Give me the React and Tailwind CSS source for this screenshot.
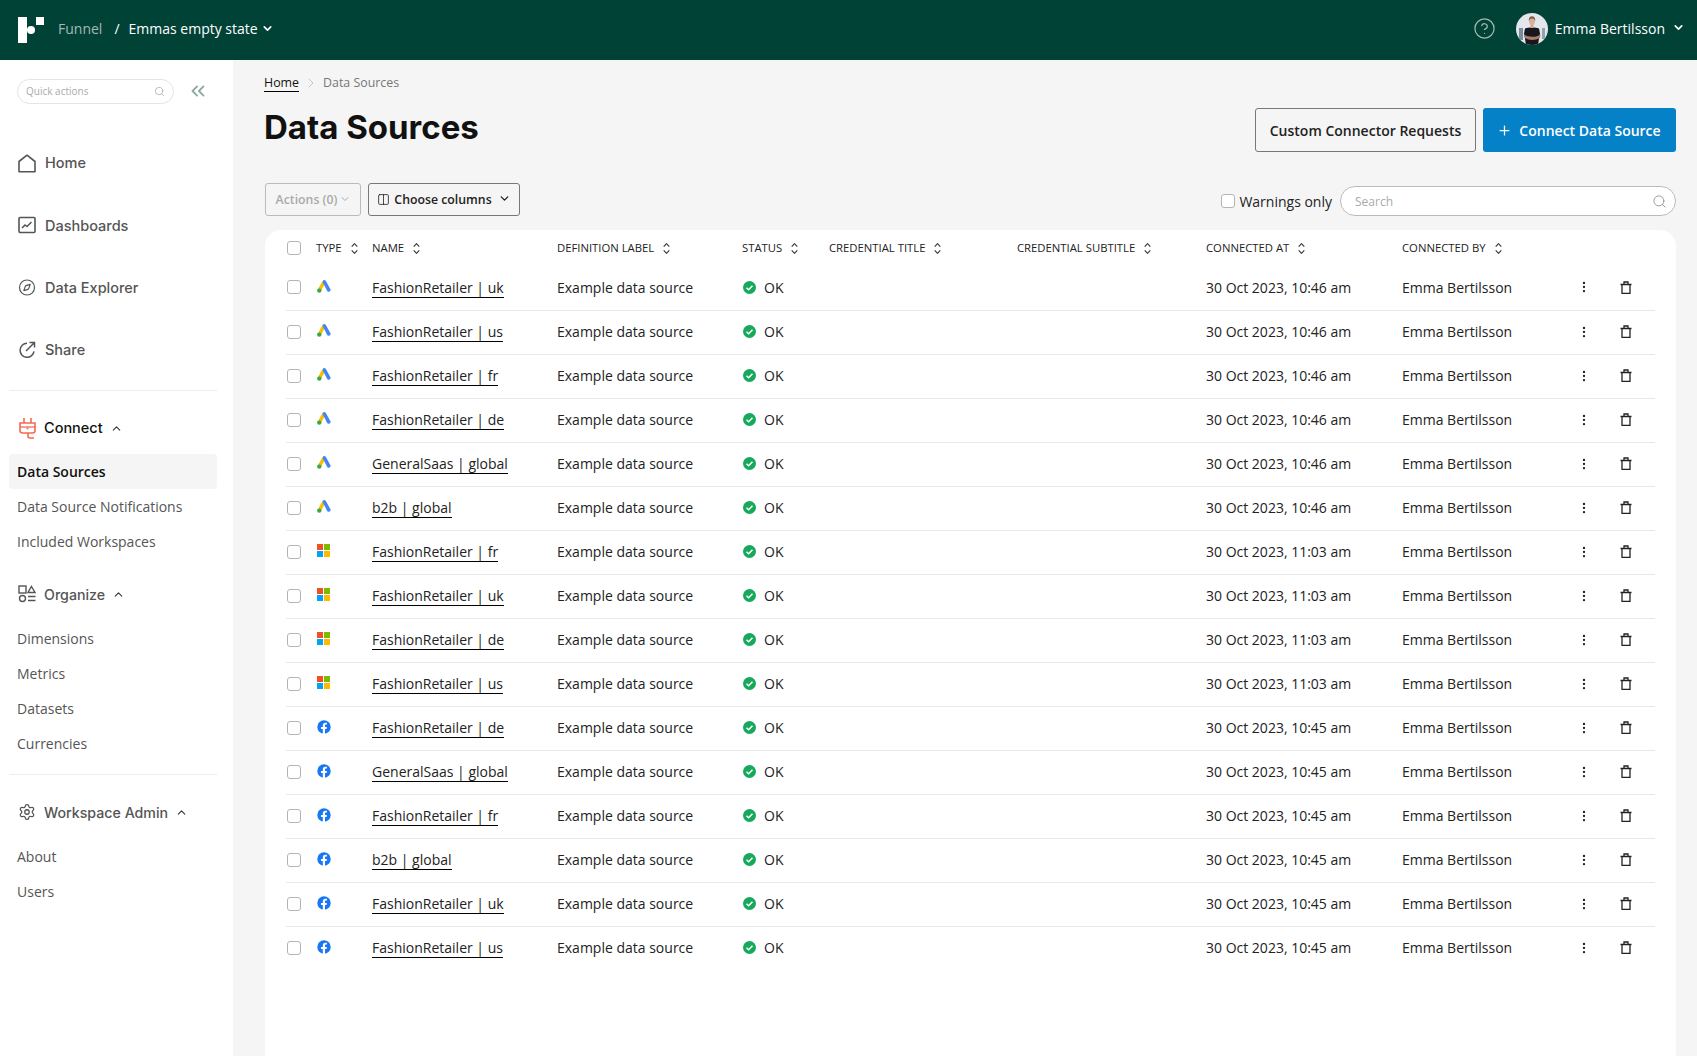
import React from "react";
import {
  ChevronDown,
  ChevronUp,
  ChevronRight,
  ChevronsLeft,
  CircleHelp,
  Columns2,
  Compass,
  EllipsisVertical,
  Plus,
  Search,
  Settings,
} from "lucide-react";

const openSans = "font-['Open_Sans',sans-serif]";
const grotesk = "font-['Inter',sans-serif]";

const rows = [
  ["ads", "FashionRetailer | uk", "10:46"],
  ["ads", "FashionRetailer | us", "10:46"],
  ["ads", "FashionRetailer | fr", "10:46"],
  ["ads", "FashionRetailer | de", "10:46"],
  ["ads", "GeneralSaas | global", "10:46"],
  ["ads", "b2b | global", "10:46"],
  ["ms", "FashionRetailer | fr", "11:03"],
  ["ms", "FashionRetailer | uk", "11:03"],
  ["ms", "FashionRetailer | de", "11:03"],
  ["ms", "FashionRetailer | us", "11:03"],
  ["fb", "FashionRetailer | de", "10:45"],
  ["fb", "GeneralSaas | global", "10:45"],
  ["fb", "FashionRetailer | fr", "10:45"],
  ["fb", "b2b | global", "10:45"],
  ["fb", "FashionRetailer | uk", "10:45"],
  ["fb", "FashionRetailer | us", "10:45"],
];

const columns = [
  ["TYPE", "w-[56px]"],
  ["NAME", "w-[185px]"],
  ["DEFINITION LABEL", "w-[185px]"],
  ["STATUS", "w-[87px]"],
  ["CREDENTIAL TITLE", "w-[188px]"],
  ["CREDENTIAL SUBTITLE", "w-[189px]"],
  ["CONNECTED AT", "w-[196px]"],
  ["CONNECTED BY", "w-[175px]"],
];

function Logo() {
  return (
    <svg width="26" height="26" viewBox="0 0 26 26" fill="#fff">
      <rect x="0" y="0" width="9" height="26" />
      <rect x="18" y="0" width="8" height="8" />
      <circle cx="13" cy="13" r="4" />
    </svg>
  );
}

function Avatar() {
  return (
    <svg width="32" height="32" viewBox="0 0 32 32">
      <clipPath id="avatar-clip">
        <circle cx="16" cy="16" r="16" />
      </clipPath>
      <g clipPath="url(#avatar-clip)">
        <rect width="32" height="32" fill="#e3e6ea" />
        <rect x="3" y="15" width="4" height="12" fill="#7d8ba0" />
        <rect x="26" y="15" width="3" height="11" fill="#94a1b2" />
        <path d="M9 15.500c2-1 4-1 7-1s5 0 7 1l1 5-1 5-1 7H10l-1-7-1-5z" fill="#17171d" />
        <path d="M8 21.500c4 2.500 12 3.500 16.500 0l-.5 3.500c-5 2.500-11 2.500-15 0z" fill="#a97d66" />
        <rect x="14.500" y="11" width="3" height="4" fill="#d6a88f" />
        <ellipse cx="16" cy="8" rx="3" ry="3.800" fill="#d9b19a" />
        <path d="M12.700 8c0-3.500 1.500-4.800 3.300-4.800s3.300 1.300 3.300 4.800c-.8-1.800-1.700-2.600-3.300-2.600s-2.500.8-3.300 2.600z" fill="#7a5c42" />
      </g>
    </svg>
  );
}

function AdsIcon() {
  return (
    <svg width="14" height="13" viewBox="0 0 14 13">
      <path d="M5.400 1.200 1 9l3 1.800L8.100 3.400z" fill="#fbbc04" />
      <path d="M8.600.6a2 2 0 0 0-3 .8l-.2.3 3.700 7 .9 2.100a1.900 1.900 0 0 0 3.300-1.900L8.900 1.100z" fill="#4285f4" />
      <circle cx="2.300" cy="10.600" r="2.200" fill="#34a853" />
    </svg>
  );
}

function MsIcon() {
  return (
    <svg width="13" height="13" viewBox="0 0 13 13">
      <rect width="6" height="6" fill="#f25022" />
      <rect x="7" width="6" height="6" fill="#7fba00" />
      <rect y="7" width="6" height="6" fill="#00a4ef" />
      <rect x="7" y="7" width="6" height="6" fill="#ffb900" />
    </svg>
  );
}

function FbIcon() {
  return (
    <svg width="14" height="14" viewBox="0 0 14 14">
      <circle cx="7" cy="7" r="6.700" fill="#1877f2" />
      <path d="M9.600 9 9.900 7H8V5.700c0-.6.3-1.100 1.100-1.100h.9V2.900S9.200 2.700 8.400 2.700C6.800 2.700 5.800 3.700 5.800 5.400V7H4v2h1.800v4.900a7 7 0 0 0 2.200 0V9z" fill="#fff" />
    </svg>
  );
}

function TrashIcon() {
  return (
    <svg width="12" height="13" viewBox="0 0 12 13" fill="none" stroke="#222" strokeWidth="1.300">
      <path d="M2 3.500h8v8.800H2zM.5 3.500h11M4 3.500V1h4v2.500" />
    </svg>
  );
}

function HomeIcon() {
  return (
    <svg width="18" height="19" viewBox="0 0 18 19" fill="none" stroke="#555" strokeWidth="1.600">
      <path d="M1 17.800V7.500L9 1.200l8 6.300v10.300z" strokeLinejoin="round" />
    </svg>
  );
}

function DashIcon() {
  return (
    <svg width="18" height="18" viewBox="0 0 18 18" fill="none" stroke="#555" strokeWidth="1.600">
      <rect x="1" y="1.500" width="16" height="15" rx="1" />
      <path d="m4 12 3-3 2 1.500L13.500 6" strokeWidth="1.500" />
    </svg>
  );
}

function ShareIcon() {
  return (
    <svg width="18" height="18" viewBox="0 0 18 18" fill="none" stroke="#555" strokeWidth="1.500">
      <path d="M9 2.300a7 7 0 1 0 7 8M8 10l8.500-8.500M11.500 1.500h5v5" />
    </svg>
  );
}

function PlugIcon() {
  return (
    <svg width="17" height="21" viewBox="0 0 17 21" fill="none" stroke="#f4694f" strokeWidth="1.600">
      <path d="M5 0v5M12 0v5" />
      <path d="M1 5h15v7.500a2.500 2.500 0 0 1-2.500 2.500h-10A2.500 2.500 0 0 1 1 12.500z" />
      <path d="M.5 9h16" strokeWidth="1.300" />
      <path d="M9 15v3a2 2 0 0 0 2 2h4" />
      <circle cx="8.500" cy="10.500" r="1" fill="#f4694f" stroke="none" />
    </svg>
  );
}

function OrganizeIcon() {
  return (
    <svg width="18" height="18" viewBox="0 0 18 18" fill="none" stroke="#555" strokeWidth="1.400">
      <rect x="1" y="1" width="7" height="7" />
      <path d="M13.500 1.500 17 7.500h-7z" />
      <circle cx="4.500" cy="13.500" r="3" />
      <path d="M10 11.500h7.500M10 15.500h7.500" />
    </svg>
  );
}

function SortIcon() {
  return (
    <svg width="7" height="11" viewBox="0 0 7 11" fill="none" stroke="#333" strokeWidth="1.100">
      <path d="m.7 3.700 2.800-3 2.800 3M.7 7.300l2.800 3 2.800-3" />
    </svg>
  );
}

function OkIcon() {
  return (
    <svg width="13" height="13" viewBox="0 0 13 13">
      <circle cx="6.500" cy="6.500" r="6.500" fill="#16a95b" />
      <path d="m3.500 6.700 2.100 2 3.900-4" fill="none" stroke="#fff" strokeWidth="1.500" />
    </svg>
  );
}

function Checkbox({ className = "" }) {
  return (
    <input
      type="checkbox"
      className={`block appearance-none w-[14px] h-[14px] bg-white border border-[#b4b4b4] rounded-[3px] ${className}`}
    />
  );
}

function NavItem({ icon, label }) {
  return (
    <div className={`${grotesk} h-[62.300px] flex items-center gap-[9px] pl-[18px] text-[14.500px] font-medium text-[#555]`}>
      <span className="w-[18px] flex justify-center">{icon}</span>
      {label}
    </div>
  );
}

function SectionHead({ icon, label, active }) {
  return (
    <div
      className={`${grotesk} h-[36px] flex items-center pl-[18px] font-medium ${
        active ? "text-[14.500px] text-[#111]" : "text-[14.200px] text-[#555]"
      }`}
    >
      <span className="w-[18px] flex justify-center mr-[8px]">{icon}</span>
      {label}
      <ChevronUp size={13} strokeWidth={2} className="ml-[7px] text-[#333]" />
    </div>
  );
}

function SubItem({ label, active }) {
  return (
    <div
      className={`${openSans} h-[35px] flex items-center pl-[8px] text-[14px] rounded-[4px] ${
        active ? "bg-[#f5f5f5] font-semibold text-[#111]" : "text-[#555]"
      }`}
    >
      {label}
    </div>
  );
}

function Sidebar() {
  return (
    <aside className="w-[233px] shrink-0 bg-white">
      <div className="flex items-center pt-[19px] pl-[17px]">
        <div className="w-[157px] h-[25px] rounded-full border border-[#e4e4e4] flex items-center justify-between pl-[8px] pr-[8px]">
          <span className={`${openSans} text-[10px] text-[#aaa]`}>Quick actions</span>
          <Search size={11} strokeWidth={1.400} className="text-[#999]" />
        </div>
        <ChevronsLeft size={22} strokeWidth={2} className="ml-[13px] mb-[1px] text-[#8fa8a2]" />
      </div>
      <div className="mt-[28px]">
        <NavItem icon={<HomeIcon />} label="Home" />
        <NavItem icon={<DashIcon />} label="Dashboards" />
        <NavItem icon={<Compass size={21} strokeWidth={1.600} className="text-[#555]" />} label="Data Explorer" />
        <NavItem icon={<ShareIcon />} label="Share" />
      </div>
      <div className="ml-[9px] mr-[16px] mt-[9px] border-t border-[#eee]" />
      <div className="mt-[19px]">
        <SectionHead active label="Connect" icon={<PlugIcon />} />
      </div>
      <div className="ml-[9px] mr-[16px] mt-[8px]">
        <SubItem active label="Data Sources" />
        <SubItem label="Data Source Notifications" />
        <SubItem label="Included Workspaces" />
      </div>
      <div className="mt-[17px]">
        <SectionHead label="Organize" icon={<OrganizeIcon />} />
      </div>
      <div className="ml-[9px] mr-[16px] mt-[9px]">
        <SubItem label="Dimensions" />
        <SubItem label="Metrics" />
        <SubItem label="Datasets" />
        <SubItem label="Currencies" />
      </div>
      <div className="ml-[9px] mr-[16px] mt-[13px] border-t border-[#eee]" />
      <div className="mt-[19px]">
        <SectionHead label="Workspace Admin" icon={<Settings size={22} strokeWidth={1.700} className="text-[#555]" />} />
      </div>
      <div className="ml-[9px] mr-[16px] mt-[9px]">
        <SubItem label="About" />
        <SubItem label="Users" />
      </div>
    </aside>
  );
}

function TypeIcon({ type }) {
  if (type === "ads") return <AdsIcon />;
  if (type === "ms") return <MsIcon />;
  return <FbIcon />;
}

function SourcesTable() {
  return (
    <div className={`${openSans} mt-[14px] flex-1 bg-white rounded-t-[16px] px-[21px]`}>
      <table className="w-[1369px] table-fixed text-left">
        <thead>
          <tr className="h-[36px]">
            <th className="w-[30px] font-normal">
              <Checkbox className="ml-[1px]" />
            </th>
            {columns.map(([label, width]) => (
              <th key={label} className={`${width} font-normal text-[11.300px] text-[#222]`}>
                <span className="inline-flex items-center gap-[9px]">
                  {label}
                  <SortIcon />
                </span>
              </th>
            ))}
            <th className="w-[42px]" />
            <th />
          </tr>
        </thead>
        <tbody className="text-[14px] text-[#222] [&_td]:pb-[1px]">
          {rows.map(([type, name, time], i) => (
            <tr key={i} className={`h-[44px] ${i < rows.length - 1 ? "border-b border-[#e8e8e8]" : ""}`}>
              <td>
                <Checkbox className="ml-[1px]" />
              </td>
              <td>
                <span className="flex pb-[2px] pl-[1px]">
                  <TypeIcon type={type} />
                </span>
              </td>
              <td>
                <a className="inline-block leading-[19px] border-b border-black">{name}</a>
              </td>
              <td>Example data source</td>
              <td>
                <span className="flex items-center gap-[8px] pl-[1px]">
                  <OkIcon />
                  OK
                </span>
              </td>
              <td />
              <td />
              <td>30 Oct 2023, {time} am</td>
              <td>Emma Bertilsson</td>
              <td>
                <EllipsisVertical size={14} strokeWidth={2} />
              </td>
              <td>
                <span className="flex pl-[1px]">
                  <TrashIcon />
                </span>
              </td>
            </tr>
          ))}
        </tbody>
      </table>
    </div>
  );
}

export default function App() {
  return (
    <div className={`${openSans} h-[1056px] overflow-hidden flex flex-col bg-[#f5f5f5]`}>
      <header className="h-[60px] shrink-0 bg-[#014237] flex items-center pl-[18px] pr-[12px] text-white text-[14px]">
        <Logo />
        <span className="ml-[14px] mb-[4px] text-[#a5b8b3]">Funnel</span>
        <span className="ml-[12px] mb-[4px]">/</span>
        <span className="ml-[9px] mb-[4px] font-medium">Emmas empty state</span>
        <ChevronDown size={13} strokeWidth={3} className="ml-[3px] mb-[3px]" />
        <CircleHelp size={23} strokeWidth={1.300} className="ml-auto mb-[3px] text-[#a5b8b3]" />
        <span className="ml-[20px] flex mb-[3px]">
          <Avatar />
        </span>
        <span className="ml-[7px] mb-[3px]">Emma Bertilsson</span>
        <ChevronDown size={13} strokeWidth={3} className="ml-[7px] mb-[5px]" />
      </header>

      <div className="flex-1 flex min-h-0">
        <Sidebar />
        <main className="flex-1 flex flex-col pl-[32px] pr-[21px] pt-[13px]">
          <div className="h-[20px] flex items-center text-[12.400px] text-[#777] -ml-[1px]">
            <span className="text-[#111] border-b border-black leading-[16px]">Home</span>
            <ChevronRight size={16} strokeWidth={1} className="mx-[4px] text-[#aaa]" />
            <span>Data Sources</span>
          </div>

          <div className="mt-[15px] h-[44px] flex items-center justify-between">
            <h1 className={`${grotesk} -ml-[1px] text-[33px] font-bold text-[#111] pb-[4px]`}>Data Sources</h1>
            <div className="flex gap-[7px]">
              <button className="h-[44px] w-[221px] border border-[#777] rounded-[3px] text-[14px] font-semibold text-[#222]">
                Custom Connector Requests
              </button>
              <button className="h-[44px] w-[193px] pr-[1px] bg-[#0581c8] rounded-[3px] text-[14px] font-semibold text-white flex items-center justify-center gap-[7px]">
                <Plus size={15} strokeWidth={2} />
                Connect Data Source
              </button>
            </div>
          </div>

          <div className="mt-[31px] h-[33px] flex items-end">
            <button className="h-[33px] w-[96px] pt-[2px] pl-[1px] border border-[#bbb] rounded-[3px] text-[12.300px] font-semibold text-[#aaa] flex items-center justify-center gap-[2px]">
              Actions (0)
              <ChevronDown size={12} strokeWidth={2} className="mb-[4px]" />
            </button>
            <button className="ml-[7px] h-[33px] w-[152px] pt-[2px] border border-[#777] rounded-[3px] text-[12.300px] font-semibold text-[#222] flex items-center justify-center gap-[4px]">
              <Columns2 size={13} strokeWidth={1.500} className="mb-[2px]" />
              Choose columns
              <ChevronDown size={13} strokeWidth={2.500} className="ml-[2px] mb-[4px]" />
            </button>
            <label className="ml-auto h-[30px] flex items-center text-[14px] text-[#222] gap-[4px] -translate-x-[1px]">
              <Checkbox />
              Warnings only
            </label>
            <div className="ml-[7px] w-[336px] h-[30px] pt-[1px] bg-white border border-[#bbb] rounded-full flex items-center justify-between pl-[14px] pr-[8px]">
              <span className="text-[12px] text-[#aaa]">Search</span>
              <Search size={15} strokeWidth={1.300} className="text-[#888]" />
            </div>
          </div>

          <SourcesTable />
        </main>
      </div>
    </div>
  );
}
